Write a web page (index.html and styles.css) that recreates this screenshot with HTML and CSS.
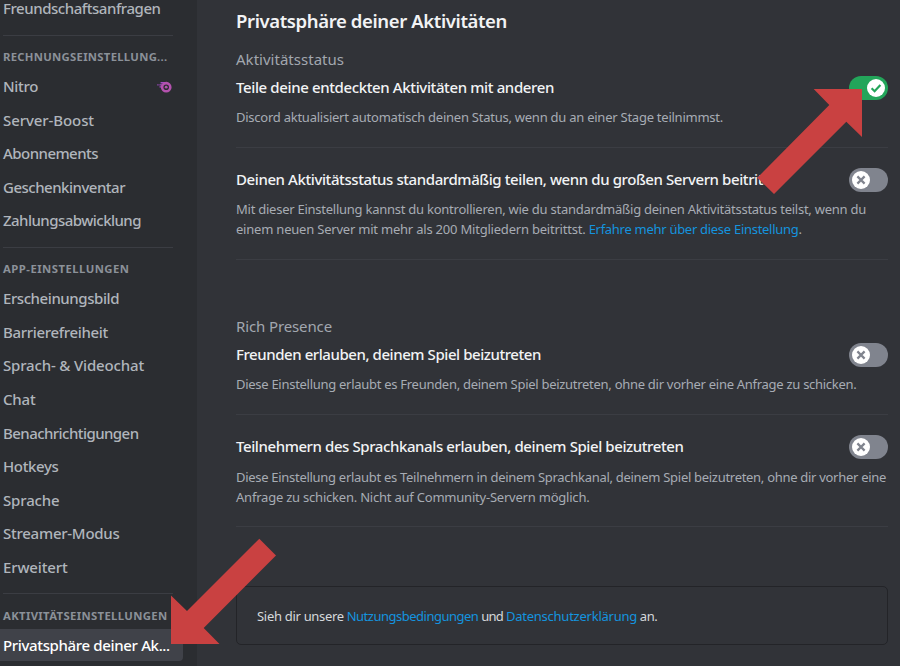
FILE: index.html
```html
<!DOCTYPE html>
<html lang="de">
<head>
<meta charset="utf-8">
<title>Privatsphäre deiner Aktivitäten</title>
<link rel="stylesheet" href="styles.css">
</head>
<body>
<div class="app">
  <nav class="sidebar">
    <a class="item t-freund">Freundschaftsanfragen</a>
    <hr class="separator">
    <h2 class="group t-rechnung">RECHNUNGSEINSTELLUNG...</h2>
    <a class="item t-nitro"><span>Nitro</span>
      <svg class="nitro" width="15" height="12" viewBox="0 0 15 12"><path d="M3.6 .9H9.2V2.6H3.6zM.3 3.2H1.6V4.5H.3zM2.4 3.2H6V4.5H2.4zM2.5 5.3H5V6.6H2.5z" fill="#a24bc4"/><circle cx="9.2" cy="6.2" r="4.1" fill="none" stroke="#b452ae" stroke-width="2.6"/><circle cx="9.2" cy="6.2" r="1.4" fill="#b452ae"/></svg>
    </a>
    <a class="item t-boost">Server-Boost</a>
    <a class="item t-abo">Abonnements</a>
    <a class="item t-geschenk">Geschenkinventar</a>
    <a class="item t-zahlung">Zahlungsabwicklung</a>
    <hr class="separator">
    <h2 class="group t-app">APP-EINSTELLUNGEN</h2>
    <a class="item t-bild">Erscheinungsbild</a>
    <a class="item t-barriere">Barrierefreiheit</a>
    <a class="item t-video">Sprach- &amp; Videochat</a>
    <a class="item t-chat">Chat</a>
    <a class="item t-benach">Benachrichtigungen</a>
    <a class="item t-hotkeys">Hotkeys</a>
    <a class="item t-sprache">Sprache</a>
    <a class="item t-streamer">Streamer-Modus</a>
    <a class="item t-erweitert">Erweitert</a>
    <hr class="separator">
    <h2 class="group t-akt">AKTIVITÄTSEINSTELLUNGEN</h2>
    <a class="item active t-privat">Privatsphäre deiner Ak...</a>
  </nav>

  <main class="content">
    <h1 class="title">Privatsphäre deiner Aktivitäten</h1>

    <section>
      <h2 class="label t-status">Aktivitätsstatus</h2>
      <div class="setting">
        <div class="head"><h3 class="t-teile">Teile deine entdeckten Aktivitäten mit anderen</h3>
          <span class="toggle on"><span class="knob"><svg viewBox="0 0 18 18"><path d="M4.6 9.3 7.6 12.2 13.4 6" stroke="#23a55a"/></svg></span></span></div>
        <p class="t-discord">Discord aktualisiert automatisch deinen Status, wenn du an einer Stage teilnimmst.</p>
      </div>
      <div class="setting">
        <div class="head"><h3 class="t-deinen">Deinen Aktivitätsstatus standardmäßig teilen, wenn du großen Servern beitrittst</h3>
          <span class="toggle"><span class="knob"><svg viewBox="0 0 18 18"><path d="M5.4 5.4 12.6 12.6M12.6 5.4 5.4 12.6" stroke="#80848e"/></svg></span></span></div>
        <p><span class="t-mit">Mit dieser Einstellung kannst du kontrollieren, wie du standardmäßig deinen Aktivitätsstatus teilst, wenn du</span><br><span class="t-einem">einem neuen Server mit mehr als 200 Mitgliedern beitrittst. </span><a class="t-erfahre">Erfahre mehr über diese Einstellung</a>.</p>
      </div>
    </section>

    <section class="presence">
      <h2 class="label t-rich">Rich Presence</h2>
      <div class="setting">
        <div class="head"><h3 class="t-freunden">Freunden erlauben, deinem Spiel beizutreten</h3>
          <span class="toggle"><span class="knob"><svg viewBox="0 0 18 18"><path d="M5.4 5.4 12.6 12.6M12.6 5.4 5.4 12.6" stroke="#80848e"/></svg></span></span></div>
        <p class="t-diese">Diese Einstellung erlaubt es Freunden, deinem Spiel beizutreten, ohne dir vorher eine Anfrage zu schicken.</p>
      </div>
      <div class="setting">
        <div class="head"><h3 class="t-teiln">Teilnehmern des Sprachkanals erlauben, deinem Spiel beizutreten</h3>
          <span class="toggle"><span class="knob"><svg viewBox="0 0 18 18"><path d="M5.4 5.4 12.6 12.6M12.6 5.4 5.4 12.6" stroke="#80848e"/></svg></span></span></div>
        <p class="tall"><span class="t-kanal">Diese Einstellung erlaubt es Teilnehmern in deinem Sprachkanal, deinem Spiel beizutreten, ohne dir vorher eine</span><br><span class="t-anfrage">Anfrage zu schicken. Nicht auf Community-Servern möglich.</span></p>
      </div>
    </section>

    <div class="notice"><span class="t-sieh">Sieh dir unsere</span><a class="t-nutzung">Nutzungsbedingungen</a><span class="t-und">und</span><a class="t-daten">Datenschutzerklärung</a><span class="t-an">an.</span></div>
  </main>

  <svg class="arrows" width="900" height="666" viewBox="0 0 900 666">
    <path d="M813.7 89H862V137L846.3 121.8 774 194 757.3 177.7 829.3 105z"/>
    <path d="M171 595.5 187 611 259.3 538.8 276 555.5 203.7 628 219.5 644H171z"/>
  </svg>
</div>
</body>
</html>
```
FILE: styles.css
```css
* { box-sizing: border-box; }
body { margin: 0; background: #313338; font-family: "Noto Sans", sans-serif; }
h1, h2, h3, p { margin: 0; font-weight: 400; white-space: nowrap; }

.app { position: relative; display: flex; width: 900px; height: 666px; overflow: hidden; }

.sidebar { display: flex; flex-direction: column; flex: none; width: 197px; height: 666px; background: #2b2d31; }
.item { display: flex; align-items: center; justify-content: space-between; flex: none; width: 183px; height: 31.6px; margin-bottom: 2px; padding: 0 10px 1px 3px; border-radius: 0 4px 4px 0; color: #b0b5bc; font-size: 15px; font-weight: 500; line-height: 16px; white-space: nowrap; }
.item:first-child { margin-top: -7px; }
.item.active { background: #404249; color: #fff; }
.separator { flex: none; width: 170px; height: 1px; margin: 8px 0 0 3px; border: 0; background: #3b3d43; }
.group { flex: none; height: 35.2px; padding: 13.6px 0 0 3px; color: #8b9199; font-size: 11.3px; font-weight: 700; line-height: 15px; }
.t-rechnung { padding-top: 13px; }
.nitro { margin: 1px 1px 0 0; }

.content { flex: none; width: 703px; padding: 9px 12px 0 39px; }
.title { height: 24px; color: #f2f3f5; font-size: 18.5px; font-weight: 600; line-height: 24px; letter-spacing: -.378px; }
.label { height: 20px; margin-top: 16px; color: #a2a7af; font-size: 15px; line-height: 20px; }
.setting { padding: 19px 0 19.4px; border-bottom: 1px solid #3b3d43; }
.label + .setting { padding-top: 6px; }
.presence { padding-top: 40px; }
.head { display: flex; justify-content: space-between; height: 24px; }
.head h3 { color: #f2f3f5; font-size: 15px; font-weight: 500; line-height: 24px; }
.setting p { margin-top: 9px; color: #a7acb4; font-size: 13px; line-height: 19.6px; }
.setting p.tall { line-height: 20px; }
a { color: #1493df; }

.toggle { flex: none; width: 39.5px; height: 24px; margin-top: 1px; padding: 3px; border-radius: 12px; background: #80848e; }
.toggle.on { display: flex; justify-content: flex-end; background: #23a55a; }
.knob { display: block; width: 18px; height: 18px; border-radius: 50%; background: #fff; }
.knob svg { display: block; width: 18px; height: 18px; fill: none; stroke-width: 2.2; }

.notice { display: flex; align-items: center; height: 59px; margin-top: 59.4px; padding-left: 20px; border: 1px solid #232428; border-radius: 5px; color: #d6d9dc; font-size: 13px; white-space: nowrap; }
.notice > * + * { margin-left: 2.8px; }

.arrows { position: absolute; top: 0; left: 0; fill: #c94141; }

/* Tracking per line */
.t-freund { letter-spacing: -.452px; }
.t-rechnung { letter-spacing: .288px; }
.t-nitro { letter-spacing: -.33px; }
.t-boost { letter-spacing: -.088px; }
.t-abo { letter-spacing: -.543px; }
.t-geschenk { letter-spacing: -.501px; }
.t-zahlung { letter-spacing: -.539px; }
.t-app { letter-spacing: .478px; }
.t-bild { letter-spacing: -.433px; }
.t-barriere { letter-spacing: -.33px; }
.t-video { letter-spacing: -.161px; }
.t-chat { letter-spacing: -.192px; }
.t-benach { letter-spacing: -.559px; }
.t-hotkeys { letter-spacing: -.364px; }
.t-sprache { letter-spacing: -.151px; }
.t-streamer { letter-spacing: -.26px; }
.t-erweitert { letter-spacing: -.156px; }
.t-akt { letter-spacing: .353px; }
.t-privat { letter-spacing: -.35px; }
.t-status { letter-spacing: .02px; }
.t-teile { letter-spacing: -.378px; }
.t-discord { letter-spacing: -.247px; }
.head .t-deinen { letter-spacing: -.41px; }
.t-mit { letter-spacing: -.249px; }
.t-einem { letter-spacing: -.211px; }
.t-erfahre { letter-spacing: -.288px; }
.t-rich { letter-spacing: -.121px; }
.t-freunden { letter-spacing: -.438px; }
.t-diese { letter-spacing: -.283px; }
.t-teiln { letter-spacing: -.412px; }
.t-kanal { letter-spacing: -.293px; }
.t-anfrage { letter-spacing: -.217px; }
.t-sieh { letter-spacing: -.3px; }
.t-nutzung { letter-spacing: -.5px; }
.t-und { letter-spacing: -.7px; }
.t-daten { letter-spacing: -.24px; }
.t-an { letter-spacing: -.45px; }
```
